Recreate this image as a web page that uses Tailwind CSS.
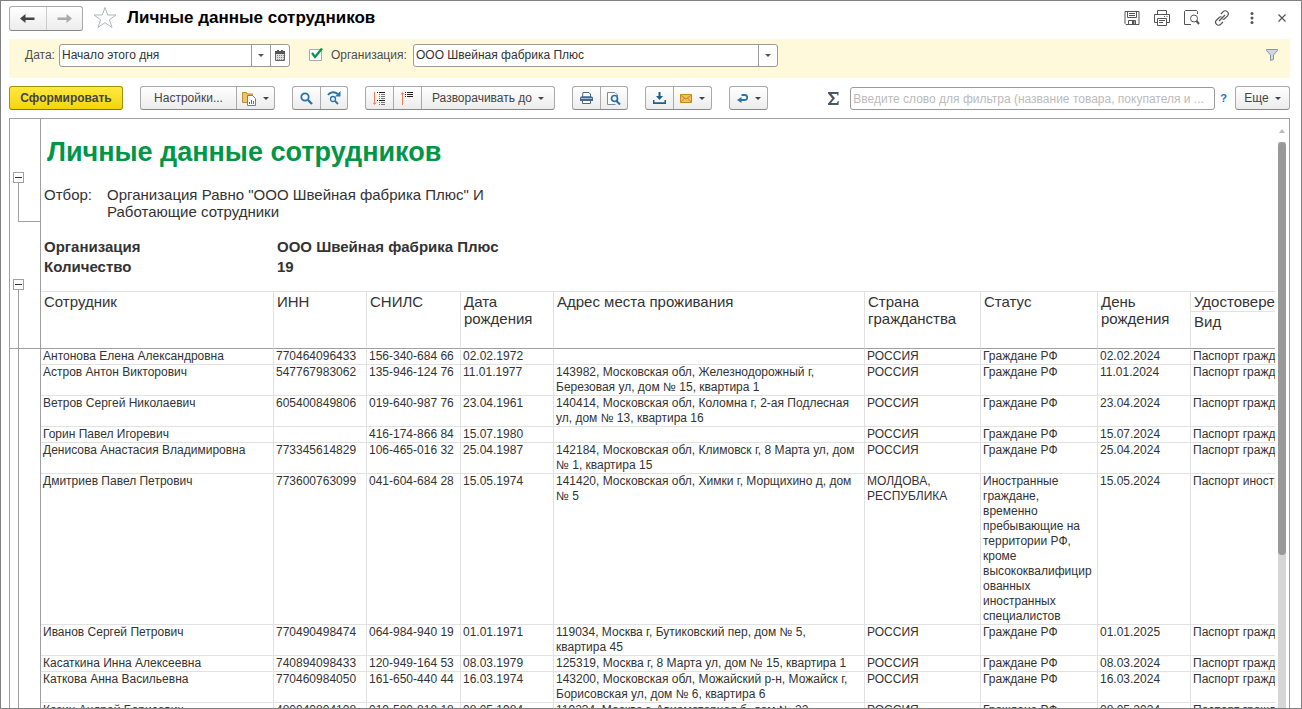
<!DOCTYPE html>
<html lang="ru">
<head>
<meta charset="utf-8">
<title>Личные данные сотрудников</title>
<script src="https://cdn.jsdelivr.net/npm/@tailwindcss/browser@4"></script>
</head>
<body class="h-screen overflow-hidden bg-white font-['Liberation_Sans',Arial,sans-serif] text-[12px] text-[#333]">
<div class="flex h-full flex-col overflow-hidden border border-[#808080]">

  <header class="flex h-[38px] shrink-0 items-center pr-1 pl-2">
    <div class="mt-[-4px] flex h-[25px] w-[74px] rounded-[3px] border border-[#aaa] border-b-[#888] bg-linear-to-b from-white to-[#ececec]">
      <button aria-label="Назад" class="flex flex-1 items-center justify-center border-r border-[#ccc]"><svg width="15" height="11" viewBox="0 0 15 11"><path d="M0 5.5 5.500 1v3.500h9v2.500h-9V10z" fill="#444"/></svg></button>
      <button aria-label="Вперед" class="flex flex-1 items-center justify-center"><svg width="15" height="11" viewBox="0 0 15 11"><path d="M15 5.500 9.500 1v3.500h-9v2.500h9V10z" fill="#aaa"/></svg></button>
    </div>
    <button aria-label="В избранное" class="mt-[-6px] ml-[10px]"><svg width="24" height="23" viewBox="0 0 24 23"><path d="M12 1.500 14.700 9H23l-6.600 4.800L19 21.500 12 16.700 5 21.500l2.600-7.700L1 9h8.300z" fill="#fff" stroke="#b0b6bc"/></svg></button>
    <h1 class="mt-[-4px] ml-[10px] flex-1 text-[17px] leading-[22px] font-bold text-black">Личные данные сотрудников</h1>
    <div class="mt-[-5px] flex items-center text-[#555]">
      <button aria-label="Сохранить" class="flex w-[30px] justify-center"><svg width="16" height="16" viewBox="0 0 16 16" fill="none" stroke="currentColor"><path d="M1 1.500h14v13H2L1 13.500z"/><path d="M3.500 2v5.500h9V2M5 3.500h6M5 5.500h6M4.500 14.500v-4h7v4"/><path d="M8 11h2.500v3H8z" fill="currentColor" stroke="none"/></svg></button>
      <button aria-label="Печать" class="flex w-[30px] justify-center"><svg width="16" height="16" viewBox="0 0 16 16" fill="none" stroke="currentColor"><path d="M3.500 4.500v-4h9v4M3.500 12.500H.5v-8h15v8h-3M3.500 8.500h9v7h-9zM5 10.500h6M5 12.500h4M10 6.500h1M12.500 6.500h1"/></svg></button>
      <button aria-label="Предварительный просмотр" class="flex w-[30px] justify-center"><svg width="16" height="16" viewBox="0 0 16 16" fill="none" stroke="currentColor"><path d="M13.500 4V1.500l-1-1h-11l-1 1v13H7"/><circle cx="10" cy="8.500" r="3.500"/><path d="m12.500 11 2.500 3" stroke-width="2"/></svg></button>
      <button aria-label="Получить ссылку" class="flex w-[30px] justify-center"><svg width="16" height="16" viewBox="0 0 16 16" fill="none" stroke="currentColor" stroke-width="1.200"><path d="m5 11 6-6M7 4l2-2.200a2.800 2.800 0 0 1 4.200-.2 3 3 0 0 1 .3 4.200L10.800 8.500a2.500 2.500 0 0 1-2.300.7M9 12l-2.200 2.200a2.800 2.800 0 0 1-4.200.2 3 3 0 0 1-.2-4.200l2.800-2.700a2.500 2.500 0 0 1 2.300-.7"/></svg></button>
      <button aria-label="Дополнительно" class="flex w-[30px] justify-center"><svg width="4" height="14" viewBox="0 0 4 14" fill="currentColor"><circle cx="2" cy="2.500" r="1.500"/><circle cx="2" cy="7" r="1.500"/><circle cx="2" cy="11.500" r="1.500"/></svg></button>
      <button aria-label="Закрыть" class="flex w-[30px] justify-center"><svg width="8" height="8" viewBox="0 0 8 8" stroke="currentColor" stroke-width="1.200"><path d="m.5.5 7 7m0-7-7 7"/></svg></button>
    </div>
  </header>

  <div class="mr-[11px] ml-2 flex h-[39px] shrink-0 items-start bg-[#fef9da] pt-[5px] pl-4 leading-[23px]">
    <label for="date" class="w-[34px] text-[#4d4d4d]">Дата:</label>
    <div class="flex h-[23px] w-[231px] overflow-hidden rounded-[3px] border border-[#999] bg-white">
      <input id="date" value="Начало этого дня" class="min-w-0 flex-1 pl-[2px] outline-none">
      <button aria-label="Выбрать" class="flex w-[19px] items-center justify-center border-l border-[#999]"><svg width="6" height="3" viewBox="0 0 6 3"><path d="M0 0h6L3 3z" fill="#555"/></svg></button>
      <button aria-label="Календарь" class="flex w-[19px] items-center justify-center border-l border-[#999]"><svg width="10" height="11" viewBox="0 0 10 11"><path d="M.5 1.500h9v9h-9z" fill="#ddd" stroke="#666"/><path d="M0 1h10v3H0zM2 0h2v2H2zM6 0h2v2H6z" fill="#555"/><path d="M2 5.500h7M2 7.500h7M2 9.500h7" stroke="#888" stroke-dasharray="1 1"/></svg></button>
    </div>
    <label class="ml-[19px] flex w-[104px] text-[#4d4d4d]">
      <input type="checkbox" checked class="peer sr-only">
      <svg class="mt-1 mr-2 h-[14px] w-[14px] shrink-0 overflow-visible" viewBox="0 0 14 14"><path d="M.5 1.500h12v11H.5z" fill="#fff" stroke="#aaa"/><path d="m3 5 3 4L13 .5" fill="none" stroke="#009646" stroke-width="2.200"/></svg>
      Организация:</label>
    <div class="flex h-[23px] w-[365px] overflow-hidden rounded-[3px] border border-[#999] bg-white">
      <input aria-label="Организация" value="ООО Швейная фабрика Плюс" class="min-w-0 flex-1 pl-[2px] outline-none">
      <button aria-label="Выбрать организацию" class="flex w-[19px] items-center justify-center border-l border-[#999]"><svg width="6" height="3" viewBox="0 0 6 3"><path d="M0 0h6L3 3z" fill="#555"/></svg></button>
    </div>
    <button aria-label="Фильтр" class="mt-[5px] mr-3 ml-auto"><svg width="12" height="12" viewBox="0 0 12 12"><path d="M.5.5h11v1L7.500 6v4.500L4.500 11.500V6L.5 1.500z" fill="#cfd8df" stroke="#8b979f"/></svg></button>
  </div>

  <div class="mr-[11px] ml-2 flex h-[40px] shrink-0 items-start pt-2 whitespace-nowrap text-[#444]">
    <button class="h-[24px] w-[114px] rounded-[3px] border border-[#a39100] border-b-[#867700] bg-linear-to-b from-[#ffe93d] to-[#f3d500] font-bold">Сформировать</button>
    <div class="ml-[17px] flex h-[24px] w-[135px] rounded-[3px] border border-[#aaa] border-b-[#888] bg-linear-to-b from-white to-[#ececec]">
      <button class="flex-1">Настройки...</button>
      <button aria-label="Варианты отчета" class="flex w-[38px] items-center justify-center gap-[6px] border-l border-[#aaa]"><svg width="15" height="15" viewBox="0 0 15 15"><path d="M.5 11.500V1.500h4l1 1.500h5v8.500z" fill="#f1c267" stroke="#c18b33"/><path d="M5.500 4.500h5l3 3v7h-8z" fill="#fff" stroke="#6d8290"/><path d="M7.500 13v-2" stroke="#d33"/><path d="M9.500 13V9" stroke="#d33"/><path d="M11.500 13v-3" stroke="#2a4"/></svg><svg width="6" height="3" viewBox="0 0 6 3"><path d="M0 0h6L3 3z" fill="#444"/></svg></button>
    </div>
    <div class="ml-[17px] flex h-[24px] w-[56px] rounded-[3px] border border-[#aaa] border-b-[#888] bg-linear-to-b from-white to-[#ececec]">
      <button aria-label="Найти" class="flex flex-1 items-center justify-center border-r border-[#aaa]"><svg width="13" height="13" viewBox="0 0 13 13" fill="none" stroke="#2d74a6"><circle cx="5" cy="5" r="3.700" stroke-width="1.800"/><path d="m8 8 4 4" stroke-width="2.400"/></svg></button>
      <button aria-label="Найти следующий" class="flex flex-1 items-center justify-center"><svg width="14" height="14" viewBox="0 0 14 14" fill="none" stroke="#2d74a6"><path d="M1 4C3 .5 8 .5 11 3" stroke-width="1.800"/><path d="M13.500 0v5.500H8z" fill="#2d74a6" stroke="none"/><circle cx="6" cy="8" r="2.500" stroke-width="1.300"/><path d="m8 10 3 3" stroke-width="1.800"/></svg></button>
    </div>
    <div class="ml-[17px] flex h-[24px] w-[190px] rounded-[3px] border border-[#aaa] border-b-[#888] bg-linear-to-b from-white to-[#ececec]">
      <button aria-label="Развернуть группы" class="flex w-[28px] items-center justify-center border-r border-[#aaa]"><svg width="13" height="15" viewBox="0 0 13 15" fill="none"><path d="M1.500 1v12M0 11.500l1.500 2 1.500-2" stroke="#f08050"/><path d="M4 1.500h1M6 1.500h6M4 9.500h1M6 9.500h6" stroke="#222"/><path d="M6 3.500h1M8 3.500h4M6 5.500h1M8 5.500h4M6 7.500h1M8 7.500h4M6 11.500h1M8 11.500h4M6 13.500h1M8 13.500h4" stroke="#777"/></svg></button>
      <button aria-label="Свернуть группы" class="flex w-[28px] items-center justify-center border-r border-[#aaa]"><svg width="13" height="15" viewBox="0 0 13 15" fill="none"><path d="M1.500 14V2M0 3.500 1.500 1.500 3 3.500" stroke="#f08050"/><path d="M4 1.500h1M6 1.500h6M4 3.500h1M6 3.500h6M4 5.500h1M6 5.500h6" stroke="#222"/></svg></button>
      <button class="flex flex-1 items-center justify-center gap-[6px]">Разворачивать до<svg width="6" height="3" viewBox="0 0 6 3"><path d="M0 0h6L3 3z" fill="#444"/></svg></button>
    </div>
    <div class="ml-[17px] flex h-[24px] w-[56px] rounded-[3px] border border-[#aaa] border-b-[#888] bg-linear-to-b from-white to-[#ececec]">
      <button aria-label="Печать отчета" class="flex flex-1 items-center justify-center border-r border-[#aaa]"><svg width="13" height="12" viewBox="0 0 13 12"><path d="M3 .5h6l1.500 1.500v3h-8z" fill="#fff" stroke="#46678a"/><path d="M1 4.500h11l1 1V9H0V5.500z" fill="#46678a"/><path d="M1 6.500h11" stroke="#a9bccd"/><path d="M2.500 8.500h8v3h-8z" fill="#fff" stroke="#46678a"/></svg></button>
      <button aria-label="Просмотр печати" class="flex flex-1 items-center justify-center"><svg width="14" height="13" viewBox="0 0 14 13" fill="none"><path d="M10.500 4V3L8 .5H.5v12h8" stroke="#7b8b99" fill="#fff"/><circle cx="7.500" cy="6.500" r="3" stroke="#1f6fa5" stroke-width="1.700"/><path d="m9.500 9 3.500 3.500" stroke="#1f6fa5" stroke-width="2"/></svg></button>
    </div>
    <div class="ml-[17px] flex h-[24px] w-[67px] rounded-[3px] border border-[#aaa] border-b-[#888] bg-linear-to-b from-white to-[#ececec]">
      <button aria-label="Сохранить отчет" class="flex w-[28px] items-center justify-center border-r border-[#aaa]"><svg width="13" height="12" viewBox="0 0 13 12"><path d="M5.500 0h2v4H10L6.500 8 3 4h2.500zM0 8h1.500v2.200h10V8H13v4H0z" fill="#17608f"/></svg></button>
      <button aria-label="Отправить" class="flex flex-1 items-center justify-center gap-[7px]"><svg width="12" height="9" viewBox="0 0 12 9" fill="none" stroke="#c98a1b"><path d="M.5.5h11v8H.5z" fill="#f3bf58"/><path d="m.5 1 5.500 4L11.500 1M.5 8.500l4-4.500m3 0 4 4.500"/></svg><svg width="6" height="3" viewBox="0 0 6 3"><path d="M0 0h6L3 3z" fill="#444"/></svg></button>
    </div>
    <button aria-label="Перейти" class="ml-[17px] flex h-[24px] w-[39px] items-center justify-center gap-[7px] rounded-[3px] border border-[#aaa] border-b-[#888] bg-linear-to-b from-white to-[#ececec]"><svg width="11" height="9" viewBox="0 0 11 9"><path d="M4.500 1H8c3 0 3 5 0 5H4" fill="none" stroke="#2d74a6" stroke-width="1.800"/><path d="M0 6 4.500 3v6z" fill="#2d74a6"/></svg><svg width="6" height="3" viewBox="0 0 6 3"><path d="M0 0h6L3 3z" fill="#444"/></svg></button>
    <button aria-label="Сумма" class="mt-[6px] mr-[11px] ml-auto"><svg width="11" height="13" viewBox="0 0 11 13"><path d="M0 0h10.500v3.500h-1L9 2H3.500L7 6.300 3 11h6l.8-2h1l-.3 4H0v-1.500l4.300-5L0 1.500z" fill="#4a5866"/></svg></button>
    <input aria-label="Фильтр отчета" placeholder="Введите слово для фильтра (название товара, покупателя и ..." class="mt-px h-[23px] w-[365px] rounded-[3px] border border-[#999] bg-white px-[2px] outline-none placeholder:text-[#bbb]">
    <a href="#" class="mr-2 ml-[5px] mt-[4px] text-[11px] font-bold text-[#1276c0]">?</a>
    <button class="flex h-[24px] w-[55px] items-center justify-center gap-[6px] rounded-[3px] border border-[#aaa] border-b-[#888] bg-linear-to-b from-white to-[#ececec]">Еще<svg width="6" height="3" viewBox="0 0 6 3"><path d="M0 0h6L3 3z" fill="#444"/></svg></button>
  </div>

  <main class="mr-[11px] ml-2 flex min-h-0 flex-1 overflow-hidden border-x border-t border-[#a0a0a0]">
    <div class="flex w-[30px] shrink-0 flex-col">
      <div class="flex h-[229px] flex-col pl-[3px]">
        <button aria-label="Свернуть шапку" class="mt-[53px] flex h-[11px] w-[11px] shrink-0 items-center justify-center border border-[#a0a0a0] bg-white"><span class="h-px w-[7px] bg-[#333]"></span></button>
        <div class="ml-[5px] h-[39px] shrink-0 border-b border-l border-[#a0a0a0]"></div>
        <button aria-label="Свернуть таблицу" class="mt-[57px] flex h-[11px] w-[11px] shrink-0 items-center justify-center border border-[#a0a0a0] bg-white"><span class="h-px w-[7px] bg-[#333]"></span></button>
        <div class="ml-[5px] flex-1 border-l border-[#a0a0a0]"></div>
      </div>
      <div class="flex-1 border-t border-[#a0a0a0] pl-2"><div class="h-full border-l border-[#a0a0a0]"></div></div>
    </div>
    <div class="min-w-0 flex-1 overflow-hidden border-l border-[#a0a0a0] whitespace-nowrap">
      <h2 class="h-[67px] pt-[17px] pl-[6px] text-[27px] leading-[32px] font-bold text-[#009646]">Личные данные сотрудников</h2>
      <div class="flex h-[51px] pl-[3px] text-[15px] leading-[17px]"><span class="w-[63px]">Отбор:</span><p>Организация Равно "ООО Швейная фабрика Плюс" И<br>Работающие сотрудники</p></div>
      <dl class="grid h-[54px] grid-cols-[233px_1fr] content-start pl-[3px] text-[15px] leading-[20px] font-bold"><dt>Организация</dt><dd>ООО Швейная фабрика Плюс</dd><dt>Количество</dt><dd>19</dd></dl>
      <table class="w-[1349px] table-fixed border-separate border-spacing-0 border-t border-[#e2e2e2] leading-[15px]">
        <colgroup><col class="w-[233px]"><col class="w-[93px]"><col class="w-[94px]"><col class="w-[93px]"><col class="w-[311px]"><col class="w-[116px]"><col class="w-[117px]"><col class="w-[93px]"><col class="w-[199px]"></colgroup>
        <thead class="text-left align-top text-[15px] leading-[17px] [&_th]:border-r [&_th]:border-b [&_th]:border-r-[#e2e2e2] [&_th]:border-b-[#a0a0a0] [&_th]:px-[3px] [&_th]:pt-px [&_th]:align-top [&_th]:font-normal">
          <tr class="h-[20px]"><th rowspan="2">Сотрудник</th><th rowspan="2">ИНН</th><th rowspan="2">СНИЛС</th><th rowspan="2">Дата<br>рождения</th><th rowspan="2">Адрес места проживания</th><th rowspan="2">Страна<br>гражданства</th><th rowspan="2">Статус</th><th rowspan="2">День<br>рождения</th><th class="border-b-[#e2e2e2]!">Удостоверение личности</th></tr>
          <tr class="h-[37px]"><th>Вид</th></tr>
        </thead>
        <tbody class="[&_td]:border-r [&_td]:border-b [&_td]:border-[#e2e2e2] [&_td]:pl-[2px] [&_td]:align-top">
          <tr><td>Антонова Елена Александровна</td><td>770464096433</td><td>156-340-684 66</td><td>02.02.1972</td><td></td><td>РОССИЯ</td><td>Граждане РФ</td><td>02.02.2024</td><td>Паспорт гражданина РФ</td></tr>
          <tr><td>Астров Антон Викторович</td><td>547767983062</td><td>135-946-124 76</td><td>11.01.1977</td><td>143982, Московская обл, Железнодорожный г,<br>Березовая ул, дом № 15, квартира 1</td><td>РОССИЯ</td><td>Граждане РФ</td><td>11.01.2024</td><td>Паспорт гражданина РФ</td></tr>
          <tr><td>Ветров Сергей Николаевич</td><td>605400849806</td><td>019-640-987 76</td><td>23.04.1961</td><td>140414, Московская обл, Коломна г, 2-ая Подлесная<br>ул, дом № 13, квартира 16</td><td>РОССИЯ</td><td>Граждане РФ</td><td>23.04.2024</td><td>Паспорт гражданина РФ</td></tr>
          <tr><td>Горин Павел Игоревич</td><td></td><td>416-174-866 84</td><td>15.07.1980</td><td></td><td>РОССИЯ</td><td>Граждане РФ</td><td>15.07.2024</td><td>Паспорт гражданина РФ</td></tr>
          <tr><td>Денисова Анастасия Владимировна</td><td>773345614829</td><td>106-465-016 32</td><td>25.04.1987</td><td>142184, Московская обл, Климовск г, 8 Марта ул, дом<br>№ 1, квартира 15</td><td>РОССИЯ</td><td>Граждане РФ</td><td>25.04.2024</td><td>Паспорт гражданина РФ</td></tr>
          <tr><td>Дмитриев Павел Петрович</td><td>773600763099</td><td>041-604-684 28</td><td>15.05.1974</td><td>141420, Московская обл, Химки г, Морщихино д, дом<br>№ 5</td><td>МОЛДОВА,<br>РЕСПУБЛИКА</td><td>Иностранные<br>граждане,<br>временно<br>пребывающие на<br>территории РФ,<br>кроме<br>высококвалифицир<br>ованных<br>иностранных<br>специалистов</td><td>15.05.2024</td><td>Паспорт иностранного гражданина</td></tr>
          <tr><td>Иванов Сергей Петрович</td><td>770490498474</td><td>064-984-940 19</td><td>01.01.1971</td><td>119034, Москва г, Бутиковский пер, дом № 5,<br>квартира 45</td><td>РОССИЯ</td><td>Граждане РФ</td><td>01.01.2025</td><td>Паспорт гражданина РФ</td></tr>
          <tr><td>Касаткина Инна Алексеевна</td><td>740894098433</td><td>120-949-164 53</td><td>08.03.1979</td><td>125319, Москва г, 8 Марта ул, дом № 15, квартира 1</td><td>РОССИЯ</td><td>Граждане РФ</td><td>08.03.2024</td><td>Паспорт гражданина РФ</td></tr>
          <tr><td>Каткова Анна Васильевна</td><td>770460984050</td><td>161-650-440 44</td><td>16.03.1974</td><td>143200, Московская обл, Можайский р-н, Можайск г,<br>Борисовская ул, дом № 6, квартира 6</td><td>РОССИЯ</td><td>Граждане РФ</td><td>16.03.2024</td><td>Паспорт гражданина РФ</td></tr>
          <tr><td>Козин Андрей Борисович</td><td>480040804108</td><td>019-580-818 18</td><td>08.05.1984</td><td>119234, Москва г, Авиамоторная б, дом № 22</td><td>РОССИЯ</td><td>Граждане РФ</td><td>08.05.2024</td><td>Паспорт гражданина РФ</td></tr>
        </tbody>
      </table>
    </div>
    <div class="flex w-[14px] shrink-0 flex-col items-center pt-[10px]">
      <svg width="6" height="4" viewBox="0 0 6 4" class="shrink-0"><path d="M3 0 6 4H0z" fill="#bbb"/></svg>
      <div class="mt-[9px] w-2 flex-1 bg-[#d6d6d6]"><div class="h-[413px] rounded-full bg-[#999]"></div></div>
    </div>
  </main>
</div>
</body>
</html>
